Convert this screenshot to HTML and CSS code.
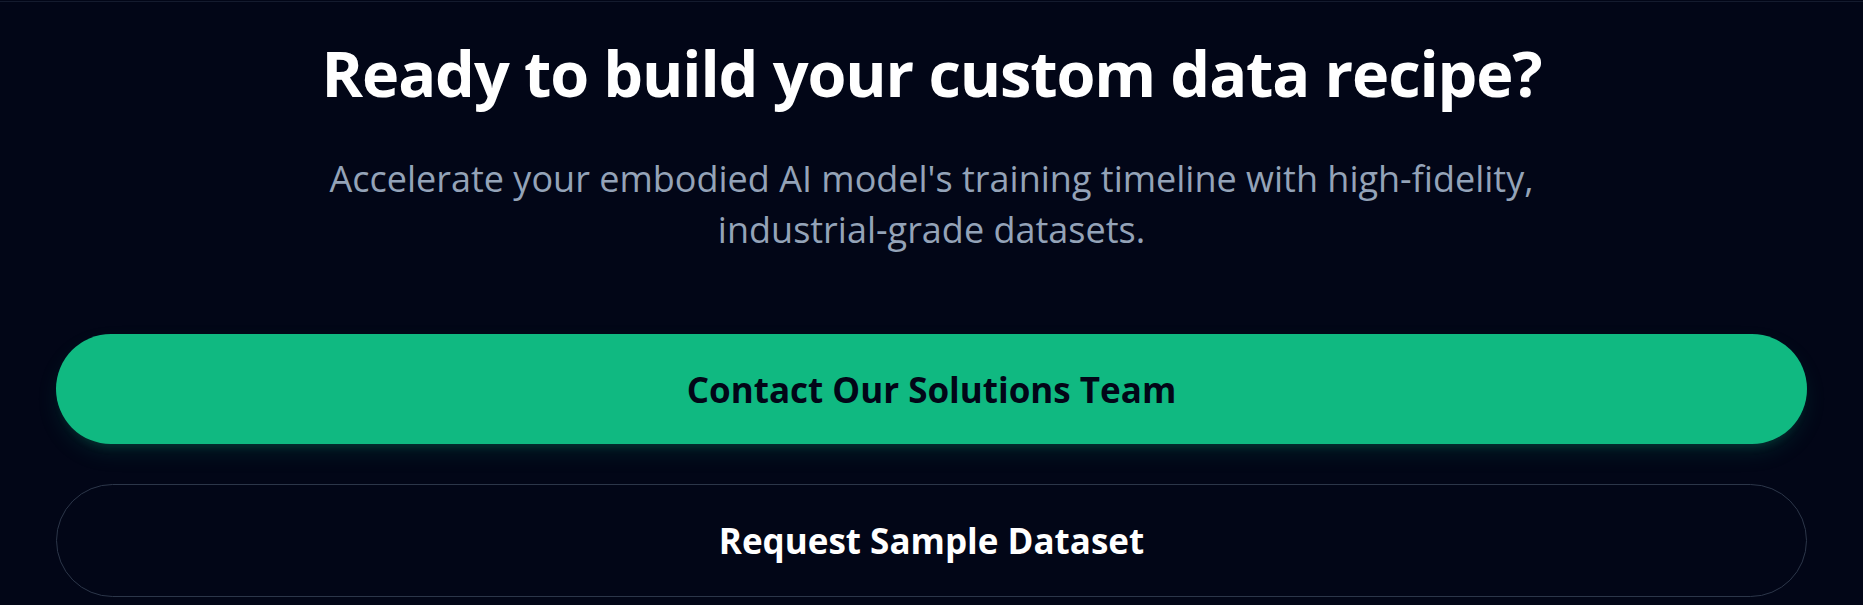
FILE: index.html
```html
<!DOCTYPE html>
<html lang="en">
<head>
    <meta charset="UTF-8">
    <meta name="viewport" content="width=device-width, initial-scale=1.0">
    <title>Custom Data Recipe</title>
    <link rel="stylesheet" href="styles.css">
</head>
<body>
    <!-- Call to action section -->
    <section class="cta">
        <h1 class="cta-title">Ready to build your custom data recipe?</h1>
        <p class="cta-text">Accelerate your embodied AI model's training timeline with high-fidelity, industrial-grade datasets.</p>

        <div class="cta-actions">
            <a href="#contact" class="btn btn-primary">Contact Our Solutions Team</a>
            <a href="#sample" class="btn btn-outline">Request Sample Dataset</a>
        </div>
    </section>
</body>
</html>
```

FILE: styles.css
```css
/* Page base */
body {
    margin: 0;
    background-color: #020617;
    font-family: "Open Sans", "Noto Sans", sans-serif;
    color: #ffffff;
}

/* Call to action section */
.cta {
    margin-top: 1px;
    border-top: 1px solid #141b2e;
    padding: 36px 56px 0;
    text-align: center;
}

.cta-title {
    margin: 0;
    font-size: 63px;
    line-height: 70px;
    font-weight: 700;
    letter-spacing: -1.1px;
}

.cta-text {
    max-width: 1240px;
    margin: 45px auto 0;
    font-size: 36px;
    line-height: 51px;
    color: #94a3b8;
}

/* Buttons */
.cta-actions {
    display: flex;
    flex-direction: column;
    gap: 40px;
    margin-top: 79px;
}

.btn {
    display: flex;
    align-items: center;
    justify-content: center;
    height: 110px;
    border-radius: 9999px;
    font-size: 35px;
    font-weight: 700;
    text-decoration: none;
    box-sizing: border-box;
}

.btn-primary {
    background-color: #10b981;
    color: #020617;
    box-shadow: 0 10px 25px -5px rgba(16, 185, 129, 0.18), 0 8px 10px -6px rgba(16, 185, 129, 0.18);
}

.btn-outline {
    height: 113px;
    border: 1px solid #2c3649;
    color: #ffffff;
}
```
